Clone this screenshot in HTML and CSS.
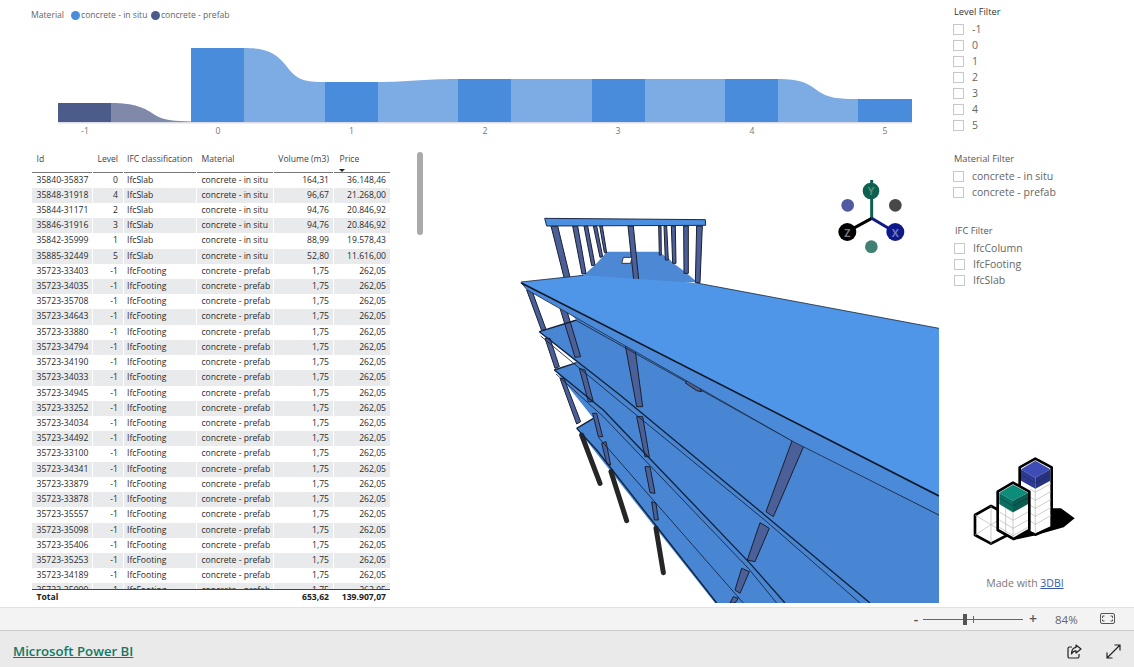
FILE: index.html
```html
<!DOCTYPE html>
<html lang="en">
<head>
<meta charset="utf-8">
<title>Microsoft Power BI</title>
<link rel="stylesheet" href="styles.css">
</head>
<body>
<div class="report">
  <main class="canvas">
    <div class="left">
      <section class="chart">
        <div class="legend">
          <span class="legend-title">Material</span>
          <span class="legend-item"><i class="dot dot-situ"></i>concrete - in situ</span>
          <span class="legend-item"><i class="dot dot-prefab"></i>concrete - prefab</span>
        </div>
        <svg class="sankey" width="939" height="129" viewBox="0 21 939 129">
          <path fill="#8089a9" d="M111 103C135 103 145 108 155 115C165 121 175 121 191 121.5L191 122L111 122Z"/>
          <path fill="#7dabe4" d="M244 48C270 48 278 55 288 68C297 80 305 82 325 82L325 122L244 122Z"/>
          <path fill="#7dabe4" d="M378 82C410 82 420 79 458 79L458 122L378 122Z"/>
          <rect fill="#7dabe4" x="511" y="79" width="81" height="43"/>
          <rect fill="#7dabe4" x="645" y="79" width="80" height="43"/>
          <path fill="#7dabe4" d="M778 79C800 79 808 83 818 91C828 98 838 99 858 99L858 122L778 122Z"/>
          <rect fill="#4c5c8a" x="58" y="103" width="53" height="19"/>
          <rect fill="#4a8cdc" x="191" y="48" width="53" height="74"/>
          <rect fill="#4a8cdc" x="325" y="82" width="53" height="40"/>
          <rect fill="#4a8cdc" x="458" y="79" width="53" height="43"/>
          <rect fill="#4a8cdc" x="592" y="79" width="53" height="43"/>
          <rect fill="#4a8cdc" x="725" y="79" width="53" height="43"/>
          <rect fill="#4a8cdc" x="858" y="99" width="54" height="23"/>
          <rect fill="#dcdde6" x="58" y="122" width="854" height="1.5"/>
          <g class="axis-label">
            <text x="85" y="134">-1</text>
            <text x="218" y="134">0</text>
            <text x="351.5" y="134">1</text>
            <text x="485" y="134">2</text>
            <text x="618" y="134">3</text>
            <text x="752" y="134">4</text>
            <text x="885" y="134">5</text>
          </g>
        </svg>
      </section>
      <section class="lower">
        <div class="table">
          <div class="row head">
            <div>Id</div><div class="num lvl">Level</div><div class="ifc">IFC classification</div><div>Material</div><div class="num">Volume (m3)</div><div class="price-head">Price<i class="sort"></i></div>
          </div>
          <div class="tbody">
            <div class="row"><div>35840-35837</div><div class="num lvl">0</div><div class="ifc">IfcSlab</div><div>concrete - in situ</div><div class="num">164,31</div><div class="num">36.148,46</div></div>
            <div class="row"><div>35848-31918</div><div class="num lvl">4</div><div class="ifc">IfcSlab</div><div>concrete - in situ</div><div class="num">96,67</div><div class="num">21.268,00</div></div>
            <div class="row"><div>35844-31171</div><div class="num lvl">2</div><div class="ifc">IfcSlab</div><div>concrete - in situ</div><div class="num">94,76</div><div class="num">20.846,92</div></div>
            <div class="row"><div>35846-31916</div><div class="num lvl">3</div><div class="ifc">IfcSlab</div><div>concrete - in situ</div><div class="num">94,76</div><div class="num">20.846,92</div></div>
            <div class="row"><div>35842-35999</div><div class="num lvl">1</div><div class="ifc">IfcSlab</div><div>concrete - in situ</div><div class="num">88,99</div><div class="num">19.578,43</div></div>
            <div class="row"><div>35885-32449</div><div class="num lvl">5</div><div class="ifc">IfcSlab</div><div>concrete - in situ</div><div class="num">52,80</div><div class="num">11.616,00</div></div>
            <div class="row"><div>35723-33403</div><div class="num lvl">-1</div><div class="ifc">IfcFooting</div><div>concrete - prefab</div><div class="num">1,75</div><div class="num">262,05</div></div>
            <div class="row"><div>35723-34035</div><div class="num lvl">-1</div><div class="ifc">IfcFooting</div><div>concrete - prefab</div><div class="num">1,75</div><div class="num">262,05</div></div>
            <div class="row"><div>35723-35708</div><div class="num lvl">-1</div><div class="ifc">IfcFooting</div><div>concrete - prefab</div><div class="num">1,75</div><div class="num">262,05</div></div>
            <div class="row"><div>35723-34643</div><div class="num lvl">-1</div><div class="ifc">IfcFooting</div><div>concrete - prefab</div><div class="num">1,75</div><div class="num">262,05</div></div>
            <div class="row"><div>35723-33880</div><div class="num lvl">-1</div><div class="ifc">IfcFooting</div><div>concrete - prefab</div><div class="num">1,75</div><div class="num">262,05</div></div>
            <div class="row"><div>35723-34794</div><div class="num lvl">-1</div><div class="ifc">IfcFooting</div><div>concrete - prefab</div><div class="num">1,75</div><div class="num">262,05</div></div>
            <div class="row"><div>35723-34190</div><div class="num lvl">-1</div><div class="ifc">IfcFooting</div><div>concrete - prefab</div><div class="num">1,75</div><div class="num">262,05</div></div>
            <div class="row"><div>35723-34033</div><div class="num lvl">-1</div><div class="ifc">IfcFooting</div><div>concrete - prefab</div><div class="num">1,75</div><div class="num">262,05</div></div>
            <div class="row"><div>35723-34945</div><div class="num lvl">-1</div><div class="ifc">IfcFooting</div><div>concrete - prefab</div><div class="num">1,75</div><div class="num">262,05</div></div>
            <div class="row"><div>35723-33252</div><div class="num lvl">-1</div><div class="ifc">IfcFooting</div><div>concrete - prefab</div><div class="num">1,75</div><div class="num">262,05</div></div>
            <div class="row"><div>35723-34034</div><div class="num lvl">-1</div><div class="ifc">IfcFooting</div><div>concrete - prefab</div><div class="num">1,75</div><div class="num">262,05</div></div>
            <div class="row"><div>35723-34492</div><div class="num lvl">-1</div><div class="ifc">IfcFooting</div><div>concrete - prefab</div><div class="num">1,75</div><div class="num">262,05</div></div>
            <div class="row"><div>35723-33100</div><div class="num lvl">-1</div><div class="ifc">IfcFooting</div><div>concrete - prefab</div><div class="num">1,75</div><div class="num">262,05</div></div>
            <div class="row"><div>35723-34341</div><div class="num lvl">-1</div><div class="ifc">IfcFooting</div><div>concrete - prefab</div><div class="num">1,75</div><div class="num">262,05</div></div>
            <div class="row"><div>35723-33879</div><div class="num lvl">-1</div><div class="ifc">IfcFooting</div><div>concrete - prefab</div><div class="num">1,75</div><div class="num">262,05</div></div>
            <div class="row"><div>35723-33878</div><div class="num lvl">-1</div><div class="ifc">IfcFooting</div><div>concrete - prefab</div><div class="num">1,75</div><div class="num">262,05</div></div>
            <div class="row"><div>35723-35557</div><div class="num lvl">-1</div><div class="ifc">IfcFooting</div><div>concrete - prefab</div><div class="num">1,75</div><div class="num">262,05</div></div>
            <div class="row"><div>35723-35098</div><div class="num lvl">-1</div><div class="ifc">IfcFooting</div><div>concrete - prefab</div><div class="num">1,75</div><div class="num">262,05</div></div>
            <div class="row"><div>35723-35406</div><div class="num lvl">-1</div><div class="ifc">IfcFooting</div><div>concrete - prefab</div><div class="num">1,75</div><div class="num">262,05</div></div>
            <div class="row"><div>35723-35253</div><div class="num lvl">-1</div><div class="ifc">IfcFooting</div><div>concrete - prefab</div><div class="num">1,75</div><div class="num">262,05</div></div>
            <div class="row"><div>35723-34189</div><div class="num lvl">-1</div><div class="ifc">IfcFooting</div><div>concrete - prefab</div><div class="num">1,75</div><div class="num">262,05</div></div>
            <div class="row"><div>35723-35099</div><div class="num lvl">-1</div><div class="ifc">IfcFooting</div><div>concrete - prefab</div><div class="num">1,75</div><div class="num">262,05</div></div>
          </div>
          <div class="row total">
            <div>Total</div><div></div><div></div><div></div><div class="num">653,62</div><div class="num">139.907,07</div>
          </div>
        </div>
        <div class="scrollbar"></div>
        <svg class="viewer" width="516" height="453" viewBox="9 -150 1548 1359">
          <!-- far storey -->
          <polygon fill="#4d88d4" points="440,240 495,222 525,195 548,170 560,155 715,155 745,175 760,190 795,215 830,245 650,262 420,262"/>
          <g class="col">
            <polygon points="393,78 413,78 458,265 441,268"/>
            <polygon points="458,78 473,78 498,220 486,222"/>
            <polygon points="492,78 503,78 525,195 515,197"/>
            <polygon points="520,78 530,78 548,170 540,172"/>
            <polygon points="539,78 547,78 560,158 553,158"/>
            <polygon points="624,78 640,78 658,258 643,258"/>
            <polygon points="716,78 723,78 724,165 718,165"/>
            <polygon points="732,78 740,78 745,180 736,180"/>
            <polygon points="754,78 766,78 768,190 758,190"/>
            <polygon points="791,78 805,78 805,220 792,220"/>
            <polygon points="830,78 847,78 840,248 826,248"/>
          </g>
          <polygon fill="#4a8fe0" stroke="#1c2a44" stroke-width="3" points="374,55 856,59 857,76 380,78"/>
          <polygon fill="#fff" stroke="#333" stroke-width="3" points="610,172 636,172 632,190 605,190"/>
          <!-- undersides -->
          <polygon fill="#4885d2" points="358,395 470,360 440,330 1557,945 1557,1209 885,1209 470,685 520,655 405,510 472,488"/>
          <!-- footings -->
          <g class="footing">
            <line x1="485" y1="705" x2="540" y2="850"/>
            <line x1="573" y1="815" x2="620" y2="962"/>
            <line x1="708" y1="985" x2="730" y2="1118"/>
          </g>
          <g class="col">
            <polygon points="320,270 335,270 378,388 365,392"/>
            <polygon points="375,415 390,415 418,500 405,505"/>
            <polygon points="420,535 432,535 482,665 470,672"/>
            <polygon points="518,640 530,640 548,710 535,710"/>
            <polygon points="545,730 558,725 572,795 560,790"/>
            <polygon points="420,325 440,330 482,470 465,472"/>
            <polygon points="478,505 495,510 520,605 505,605"/>
            <polygon points="615,432 645,445 668,620 650,620"/>
            <polygon points="650,650 668,650 688,770 675,770"/>
            <polygon points="675,800 690,800 705,880 690,878"/>
            <polygon points="695,905 708,910 715,960 703,960"/>
            <polygon points="1120,712 1157,725 1060,950 1038,935"/>
            <polygon points="1020,968 1048,985 1005,1085 982,1080"/>
            <polygon points="965,1105 988,1115 960,1180 945,1170"/>
            <polygon points="940,1190 955,1195 945,1209 930,1209"/>
          </g>
          <!-- storey edges -->
          <g class="edge">
            <polyline points="358,395 470,360"/>
            <polyline points="358,395 600,585 1040,950 1350,1209"/>
            <polyline class="fine" points="362,408 600,605 1040,965 1320,1209"/>
            <polyline points="403,510 470,488"/>
            <polyline points="403,510 550,630 990,1090 1095,1209"/>
            <polyline class="fine" points="408,522 550,650 985,1105 1070,1209"/>
            <polyline points="470,685 520,655"/>
            <polyline points="470,685 530,750 890,1209"/>
            <polyline class="fine" points="535,712 970,1209"/>
            <polyline class="fine" points="470,362 1120,725"/>
            <polyline class="fine" points="1165,745 1557,945"/>
          </g>
          <polygon fill="#4b5d90" stroke="#222" stroke-width="3" points="795,548 808,538 832,550 845,575 830,572"/>
          <!-- roof -->
          <polygon fill="#4f96e8" points="303,246 490,226 830,249 1557,385 1557,888"/>
          <polygon fill="#4a8ad8" points="303,248 1557,888 1557,945 1120,725 322,270"/>
          <polyline class="edge-heavy" points="303,248 1557,888"/>
          <polyline class="edge-thin" points="303,246 490,226"/>
          <polyline class="edge-thin" points="830,249 1557,385"/>
          <polyline class="edge-thin" points="303,248 322,270"/>
          <polyline class="edge-thin" points="322,270 1120,725"/>
          <polyline class="edge-thin" points="1120,725 1557,945"/>
          <!-- axis widget -->
          <g class="gizmo">
            <line x1="1355" y1="55" x2="1355" y2="-60" stroke="#0d5f4f"/>
            <line x1="1355" y1="55" x2="1282" y2="95" stroke="#000"/>
            <line x1="1355" y1="55" x2="1426" y2="97" stroke="#0e1a8a"/>
            <circle cx="1353" cy="-27" r="25" fill="#0d5f4f"/>
            <circle cx="1282" cy="96" r="27" fill="#000"/>
            <circle cx="1426" cy="96" r="27" fill="#0e1a8a"/>
            <circle cx="1283" cy="16" r="19" fill="#4f5aa0"/>
            <circle cx="1426" cy="16" r="19" fill="#484848"/>
            <circle cx="1354" cy="140" r="19" fill="#3f8272"/>
            <text x="1353" y="-14" fill="#4d8c7e">Y</text>
            <text x="1282" y="110" fill="#777">Z</text>
            <text x="1426" y="110" fill="#7078c0">X</text>
          </g>
        </svg>
      </section>
    </div>
    <aside class="right">
      <section class="slicer slicer-level">
        <h2>Level Filter</h2>
        <label class="opt"><i class="box"></i>-1</label>
        <label class="opt"><i class="box"></i>0</label>
        <label class="opt"><i class="box"></i>1</label>
        <label class="opt"><i class="box"></i>2</label>
        <label class="opt"><i class="box"></i>3</label>
        <label class="opt"><i class="box"></i>4</label>
        <label class="opt"><i class="box"></i>5</label>
      </section>
      <section class="slicer slicer-material">
        <h2>Material Filter</h2>
        <label class="opt"><i class="box"></i>concrete - in situ</label>
        <label class="opt"><i class="box"></i>concrete - prefab</label>
      </section>
      <section class="slicer slicer-ifc">
        <h2>IFC Filter</h2>
        <label class="opt"><i class="box"></i>IfcColumn</label>
        <label class="opt"><i class="box"></i>IfcFooting</label>
        <label class="opt"><i class="box"></i>IfcSlab</label>
      </section>
      <div class="brand">
        <svg class="logo" width="106" height="95" viewBox="215 45 318 285">
          <polygon fill="#000" points="450,205 482,205 523,235 490,262 400,287 340,300 340,280"/>
          <polygon fill="#fff" stroke="#000" stroke-width="8" stroke-linejoin="round" points="224,225 272,198 322,225 322,285 272,311 224,285"/>
          <path class="thin" d="M224 225L272 254L322 225M272 254V311M224 285L272 254L322 285M272 198V254"/>
          <polygon fill="#fff" stroke="#000" stroke-width="8" stroke-linejoin="round" points="358,82 405,56 454,82 454,262 405,284 358,262"/>
          <path class="thin" d="M388 146L405 157L452 130M388 170L405 181L452 154M388 194L405 205L452 178M388 218L405 229L452 202M388 242L405 253L452 226M405 145V281"/>
          <polygon fill="#3d4db5" points="362,88 405,62 450,88 405,113"/>
          <polygon fill="#2d3a94" points="362,88 405,113 405,146 362,122"/>
          <polygon fill="#27337f" points="405,113 450,88 450,122 405,146"/>
          <path class="band" d="M362 104L405 129L450 104"/>
          <polygon fill="#fff" stroke="#000" stroke-width="8" stroke-linejoin="round" points="292,155 338,128 387,155 387,270 340,297 292,270"/>
          <path class="thin" d="M297 192L338 217L383 192M297 216L338 241L383 216M297 240L338 265L383 240M297 262L338 287L383 262M338 217V292M316 205V278"/>
          <polygon fill="#0e8c7a" points="297,158 338,134 383,158 338,182"/>
          <polygon fill="#0a6e60" points="297,158 338,182 338,217 297,192"/>
          <polygon fill="#0a5c50" points="338,182 383,158 383,192 338,217"/>
          <path class="band" d="M297 174L338 198L383 174"/>
        </svg>
        <p class="made">Made with <a href="#">3DBI</a></p>
      </div>
    </aside>
  </main>
  <div class="zoombar">
    <span class="zoom-sign">-</span>
    <div class="slider"><i class="tick"></i><i class="thumb"></i></div>
    <span class="zoom-sign plus">+</span>
    <span class="zoom-pct">84%</span>
    <svg class="fit" width="16" height="12" viewBox="0 0 16 12">
      <rect x="0.5" y="0.5" width="14" height="10" rx="1.5" fill="none" stroke="#555"/>
      <path d="M5 3H3V5M11 3H13V5M5 8H3V6.500M11 8H13V6.500" transform="translate(-0.500 0)" fill="none" stroke="#555"/>
    </svg>
  </div>
  <footer class="footer">
    <a class="pbi" href="#">Microsoft Power BI</a>
    <div class="foot-icons">
      <svg width="15" height="15" viewBox="0 0 15 15">
        <path d="M5 3H2.500A1.500 1.500 0 0 0 1 4.500V12.500A1.500 1.500 0 0 0 2.500 14H10.500A1.500 1.500 0 0 0 12 12.500V10" fill="none" stroke="#222" stroke-width="1.200"/>
        <path d="M9 1L14 5L9 9V6.800C7 6.800 5.500 7.500 4.500 10C4.500 6.500 6.200 3.800 9 3.400Z" fill="none" stroke="#222" stroke-width="1.200" stroke-linejoin="round"/>
      </svg>
      <svg width="15" height="15" viewBox="0 0 15 15">
        <path d="M1 14L14 1M8.500 1H14V6.500M1 8.500V14H6.500" fill="none" stroke="#222" stroke-width="1.200"/>
      </svg>
    </div>
  </footer>
</div>
</body>
</html>
```

FILE: styles.css
```css
* { box-sizing: border-box; }
html, body { margin: 0; padding: 0; background: #fff; }
body { font-family: "Open Sans", "Noto Sans", "Liberation Sans", sans-serif; overflow: hidden; }
.report { width: 1134px; height: 667px; display: flex; flex-direction: column; }

.canvas { height: 607px; display: flex; background: #fff; }
.left { width: 939px; display: flex; flex-direction: column; }

.chart { height: 150px; }
.legend { height: 21px; padding: 9px 0 0 31px; display: flex; align-items: center; gap: 3.500px; font-size: 8.600px; color: #666; line-height: 12px; }
.legend-title { margin-right: 3.500px; }
.legend-item { display: flex; align-items: center; gap: 1px; }
.dot { width: 9px; height: 9px; border-radius: 50%; display: block; }
.dot-situ { background: #4a8cdc; }
.dot-prefab { background: #4c5c8a; }
.sankey { display: block; }
.axis-label text { font-size: 8.700px; fill: #777; text-anchor: middle; }

.lower { display: flex; align-items: flex-start; }
.table { width: 358px; margin: 0 0 0 32px; font-size: 8.600px; color: #2a2a2a; }
.row { display: grid; grid-template-columns: 60px 30px 72px 76px 59px 56px; column-gap: 1px; height: 15.230px; line-height: 15.230px; }
.row > div { padding: 0 4px 0 4.500px; white-space: nowrap; overflow: hidden; }
.row > .num { text-align: right; padding: 0 4px 0 0; }
.row > .lvl { padding-right: 5px; }
.row > .ifc { padding-left: 3px; }
.tbody { height: 416px; overflow: hidden; }
.tbody .row:nth-child(even) > div { background: #e9eaec; }
.row.head { height: 22.500px; line-height: 18px; color: #444; }
.row.head > div { border-bottom: 1.500px solid #777; }
.row.head > .price-head { position: relative; overflow: visible; padding-left: 5.500px; }
.sort { position: absolute; left: 5px; bottom: 0; border: 3px solid transparent; border-top: 3px solid #222; border-bottom: 0; }
.row.total { height: 16px; line-height: 15px; border-top: 1.500px solid #444; font-weight: 700; color: #222; }

.scrollbar { width: 6px; height: 83px; margin: 2px 0 0 27px; background: #aaa; border-radius: 3px; flex: none; }
.viewer { display: block; flex: none; }
.viewer .col polygon { fill: #4b5f98; stroke: #1a2030; stroke-width: 3; stroke-linejoin: round; }
.footing line { stroke: #262626; stroke-width: 15; stroke-linecap: round; }
.edge polyline { fill: none; stroke: #12223a; stroke-width: 4; }
.edge polyline.fine { stroke-width: 2.500; }
.edge-heavy { fill: none; stroke: #0c1626; stroke-width: 5; }
.edge-thin { fill: none; stroke: #1f2c40; stroke-width: 2.500; }
.gizmo line { stroke-width: 9; }
.gizmo text { font-family: "Open Sans", sans-serif; font-size: 32px; font-weight: 700; text-anchor: middle; }

.right { flex: 1; padding: 0 0 0 15px; display: flex; flex-direction: column; }
.slicer h2 { margin: 0; font-size: 9.300px; font-weight: 400; line-height: 13px; color: #333; }
.slicer-level { padding-top: 5px; }
.slicer-level h2 { margin-bottom: 3px; }
.slicer-material { margin-top: 19px; }
.slicer-material h2 { margin-bottom: 3px; color: #555; }
.slicer-ifc { margin-top: 24px; padding-left: 1px; }
.slicer-ifc h2 { margin-bottom: 3px; color: #555; }
.opt { display: flex; align-items: center; height: 16px; font-size: 10.500px; color: #666; margin-left: -1px; }
.box { width: 11px; height: 11px; border: 1px solid #c8c8c8; margin-right: 8px; display: block; }

.brand { margin-top: 167px; display: flex; flex-direction: column; align-items: center; width: 142px; }
.logo { display: block; margin-left: -1px; }
.made { margin: 26px 0 0; font-size: 10.500px; line-height: 14px; color: #777; }
.made a { color: #3a5aa8; text-decoration: underline; }
.thin { fill: none; stroke: #b4b4b4; stroke-width: 2; }
.band { fill: none; stroke: #1a1a40; stroke-width: 2; opacity: .55; }

.zoombar { height: 24px; background: #f3f3f3; border-top: 1px solid #e2e2e2; border-bottom: 1px solid #ccc; display: flex; align-items: center; justify-content: flex-end; padding-right: 18px; color: #666; font-size: 11.500px; }
.zoom-sign { width: 8px; text-align: center; font-size: 14px; font-weight: 600; color: #555; line-height: 14px; }
.slider { position: relative; width: 100px; height: 1px; margin: 0 3px 0 3px; background: #666; }
.thumb { position: absolute; left: 40px; top: -5px; width: 4px; height: 11px; background: #555; }
.tick { position: absolute; left: 50px; top: -3px; width: 1px; height: 7px; background: #666; }
.zoom-sign.plus { margin-left: 3px; margin-right: 18px; }
.zoom-pct { width: 24px; margin-right: 21px; }
.fit { display: block; }

.footer { flex: 1; background: #eaeaea; display: flex; align-items: center; justify-content: space-between; padding: 4px 13px 0; }
.pbi { font-size: 13.200px; font-weight: 600; color: #117865; text-decoration: underline; }
.foot-icons { display: flex; gap: 24px; }
.foot-icons svg { display: block; }
```
